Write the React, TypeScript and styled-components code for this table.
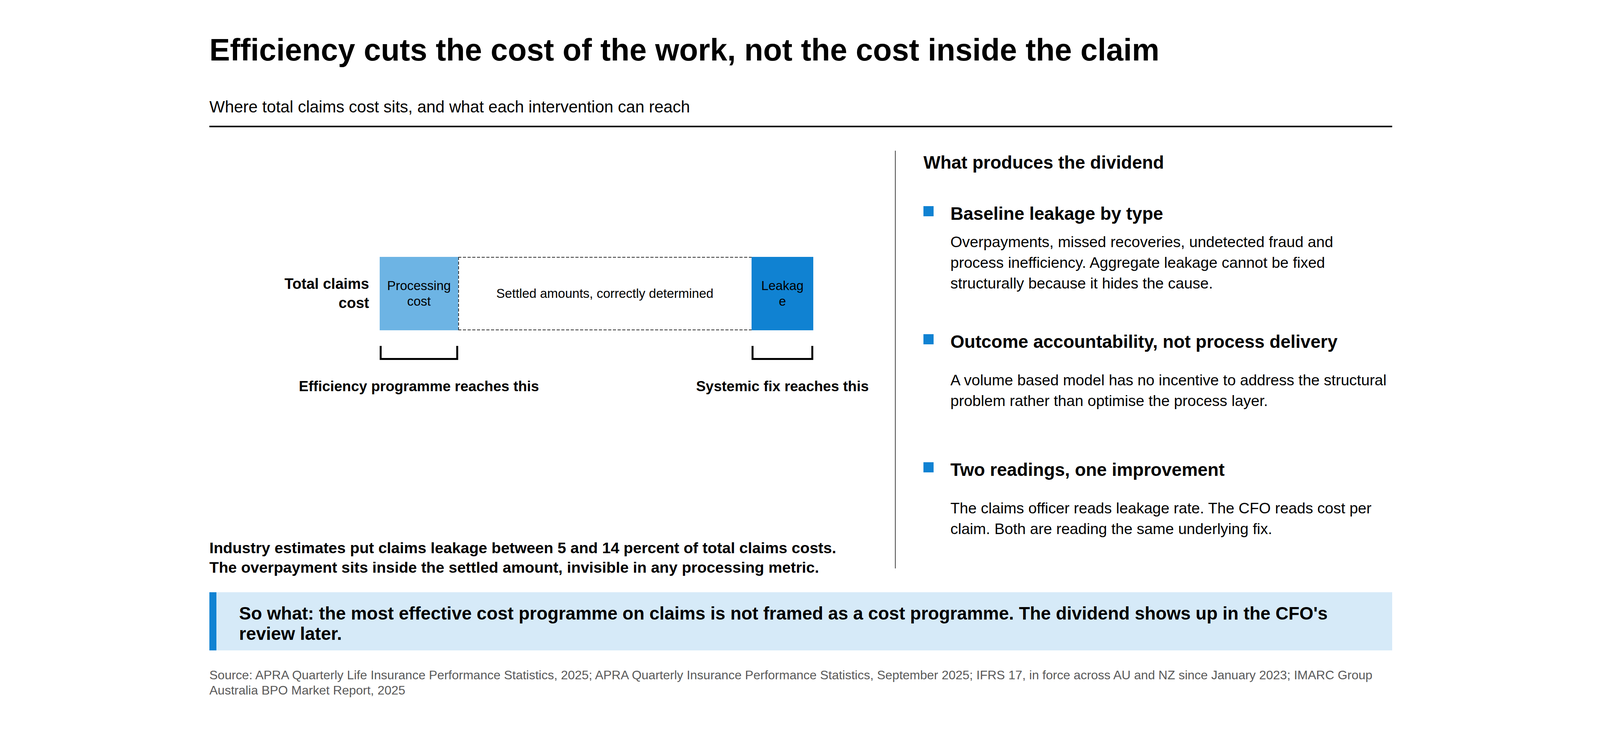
import React from 'react'
import styled, { createGlobalStyle, css } from 'styled-components'

const GlobalStyle = createGlobalStyle`
  html, body {
    margin: 0;
    padding: 0;
    background: #ffffff;
  }
  body {
    font-family: 'Liberation Sans', Arial, Helvetica, sans-serif;
    color: #000000;
  }
`

const Slide = styled.div`
  width: 4100px;
  height: 1875px;
  box-sizing: border-box;
  padding: 83px 536px 0;
  display: flex;
  flex-direction: column;
  overflow: hidden;
`

const Title = styled.h1`
  margin: 0;
  font-size: 79px;
  font-weight: 700;
  line-height: 1.15;
`

const Subtitle = styled.p`
  margin: 75px 0 0;
  font-size: 42px;
  line-height: 1.2;
`

const Rule = styled.div`
  margin-top: 23px;
  height: 4px;
  background: #000000;
`

const Main = styled.div`
  margin-top: 60px;
  display: flex;
  align-items: flex-start;
`

const LeftCol = styled.div`
  width: 1755px;
  display: flex;
  flex-direction: column;
`

const Divider = styled.div`
  width: 2px;
  height: 1070px;
  background: #444444;
  flex-shrink: 0;
`

const RightCol = styled.div`
  flex: 1;
  padding: 3px 0 0 71px;
`

/* chart */

const Chart = styled.div`
  margin-top: 272px;
  display: grid;
  grid-template-columns: 436px 201px 751px 158px;
  grid-template-rows: 188px auto auto;
`

const RowLabel = styled.div`
  grid-column: 1;
  grid-row: 1;
  display: flex;
  align-items: center;
  justify-content: flex-end;
  padding-right: 27px;
`

const RowLabelText = styled.div`
  width: 240px;
  text-align: right;
  font-size: 38px;
  font-weight: 700;
  line-height: 49px;
`

// dashed outline drawn with gradients so the dash length matches the chart (8px on, 4px off)
const dashedOutline = css`
  background:
    repeating-linear-gradient(90deg, #333333 0 8px, transparent 8px 12px) left top / 100% 2px no-repeat,
    repeating-linear-gradient(90deg, #333333 0 8px, transparent 8px 12px) left bottom / 100% 2px no-repeat,
    repeating-linear-gradient(180deg, #333333 0 8px, transparent 8px 12px) left top / 2px 100% no-repeat;
`

const Segment = styled.div<{ $col: number; $fill?: string; $dashed?: boolean }>`
  grid-column: ${p => p.$col};
  grid-row: 1;
  box-sizing: border-box;
  display: flex;
  align-items: center;
  justify-content: center;
  text-align: center;
  padding: 0 18px;
  font-size: 33px;
  line-height: 40px;
  overflow-wrap: anywhere;
  background: ${p => p.$fill ?? 'transparent'};
  ${p => p.$dashed && dashedOutline}
`

const Bracket = styled.div<{ $col: number }>`
  grid-column: ${p => p.$col};
  grid-row: 2;
  margin-top: 40px;
  height: 36px;
  box-sizing: border-box;
  border: 5px solid #000000;
  border-top: none;
`

const Caption = styled.div<{ $col: number }>`
  grid-column: ${p => p.$col};
  grid-row: 3;
  margin-top: 46px;
  display: flex;
  justify-content: center;
  white-space: nowrap;
  font-size: 37px;
  font-weight: 700;
  line-height: 44px;
`

const Summary = styled.div`
  margin-top: 366px;
  font-size: 39.5px;
  font-weight: 700;
  line-height: 50px;

  span {
    display: block;
  }
`

/* right side list */

const SectionTitle = styled.h2`
  margin: 0;
  font-size: 46px;
  font-weight: 700;
  line-height: 54px;
`

const List = styled.div`
  margin-top: 77px;
  display: flex;
  flex-direction: column;
  gap: 86px;
`

const ItemHead = styled.div`
  display: flex;
  align-items: flex-start;
`

const Square = styled.span`
  width: 26px;
  height: 26px;
  margin: 8px 43px 0 0;
  background: #1082d2;
  flex-shrink: 0;
`

const ItemTitle = styled.h3`
  margin: 0;
  font-size: 46px;
  font-weight: 700;
  line-height: 54px;
`

const ItemBody = styled.div`
  margin: 8px 0 0 69px;
  width: 1123px;
  height: 180px;
  display: flex;
  align-items: center;
  font-size: 39px;
  line-height: 53px;
`

/* footer */

const SoWhat = styled.div`
  margin-top: 39px;
  background: #d6eaf8;
  border-left: 18px solid #1082d2;
  padding: 28px 40px 17px 58px;
  font-size: 46px;
  font-weight: 700;
  line-height: 52px;
`

const Source = styled.p`
  margin: 44px 0 0;
  font-size: 32px;
  line-height: 39px;
  color: #595959;
`

const items = [
  {
    title: 'Baseline leakage by type',
    body: 'Overpayments, missed recoveries, undetected fraud and process inefficiency. Aggregate leakage cannot be fixed structurally because it hides the cause.',
  },
  {
    title: 'Outcome accountability, not process delivery',
    body: 'A volume based model has no incentive to address the structural problem rather than optimise the process layer.',
  },
  {
    title: 'Two readings, one improvement',
    body: 'The claims officer reads leakage rate. The CFO reads cost per claim. Both are reading the same underlying fix.',
  },
]

export default function App() {
  return (
    <>
      <GlobalStyle />
      <Slide>
        <Title>Efficiency cuts the cost of the work, not the cost inside the claim</Title>
        <Subtitle>Where total claims cost sits, and what each intervention can reach</Subtitle>
        <Rule />

        <Main>
          <LeftCol>
            <Chart>
              <RowLabel>
                <RowLabelText>Total claims cost</RowLabelText>
              </RowLabel>
              <Segment $col={2} $fill="#6db4e4">Processing cost</Segment>
              <Segment $col={3} $dashed>Settled amounts, correctly determined</Segment>
              <Segment $col={4} $fill="#1082d2">Leakage</Segment>

              <Bracket $col={2} />
              <Bracket $col={4} />

              <Caption $col={2}>Efficiency programme reaches this</Caption>
              <Caption $col={4}>Systemic fix reaches this</Caption>
            </Chart>

            <Summary>
              <span>Industry estimates put claims leakage between 5 and 14 percent of total claims costs.</span>
              <span>The overpayment sits inside the settled amount, invisible in any processing metric.</span>
            </Summary>
          </LeftCol>

          <Divider />

          <RightCol>
            <SectionTitle>What produces the dividend</SectionTitle>
            <List>
              {items.map(item => (
                <div key={item.title}>
                  <ItemHead>
                    <Square />
                    <ItemTitle>{item.title}</ItemTitle>
                  </ItemHead>
                  <ItemBody>
                    <div>{item.body}</div>
                  </ItemBody>
                </div>
              ))}
            </List>
          </RightCol>
        </Main>

        <SoWhat>
          So what: the most effective cost programme on claims is not framed as a cost programme. The dividend shows up in the CFO's review later.
        </SoWhat>

        <Source>
          Source: APRA Quarterly Life Insurance Performance Statistics, 2025; APRA Quarterly Insurance Performance Statistics, September 2025; IFRS 17, in force across AU and NZ since January 2023; IMARC Group Australia BPO Market Report, 2025
        </Source>
      </Slide>
    </>
  )
}
